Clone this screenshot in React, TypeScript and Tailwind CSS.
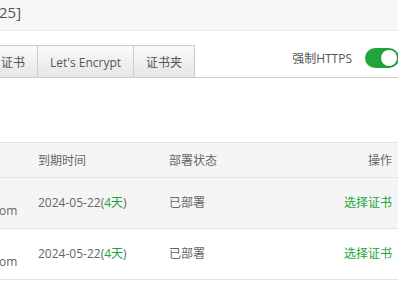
import React from 'react';

const rows = [
  { date: '2024-05-22', left: '4天', status: '已部署' },
  { date: '2024-05-22', left: '4天', status: '已部署' },
];

export default function App() {
  return (
    <div
      className="w-[398px] h-[308px] overflow-hidden bg-white text-[12px] text-[#666]"
      style={{ fontFamily: '"Open Sans", "Noto Sans CJK SC", sans-serif' }}
    >
      <div className="h-[31px] bg-[#f6f6f6] border-b border-[#eaeaea] flex items-start pt-[1px]">
        <span className="-ml-[1px] text-[15px] text-[#555]">25]</span>
      </div>

      <div className="mt-[15px] h-[32px] flex items-end justify-between border-b border-[#ccc]">
        <div className="flex h-[32px] -ml-[12px]">
          <div className="px-[12px] pt-[3px] flex items-center border border-b-0 border-[#ccc] bg-gradient-to-b from-[#fafafa] to-[#e6e6e6] text-[#555]">
            证书
          </div>
          <div className="px-[12px] pt-[3px] flex items-center border border-l-0 border-b-0 border-[#ccc] bg-gradient-to-b from-[#fafafa] to-[#e6e6e6] text-[#555]">
            Let's Encrypt
          </div>
          <div className="px-[12px] pt-[3px] flex items-center border border-l-0 border-b-0 border-[#ccc] bg-gradient-to-b from-[#fafafa] to-[#e6e6e6] text-[#555]">
            证书夹
          </div>
        </div>
        <div className="flex items-center self-start mt-[1px] gap-[13px] -mr-[1px]">
          <span className="text-[#555] mt-[3px]">强制HTTPS</span>
          <div className="w-[34px] h-[20px] rounded-full bg-[#20a53a] flex items-center justify-end pr-[2px]">
            <div className="w-[16px] h-[16px] rounded-full bg-white shadow" />
          </div>
        </div>
      </div>

      <div className="mt-[64px] border-t border-[#e4e4e4]">
        <div className="h-[35px] bg-[#f5f5f5] border-b border-[#e4e4e4] flex items-center pt-[1px]">
          <div className="w-[38px]" />
          <div className="w-[131px]">到期时间</div>
          <div className="flex-1">部署状态</div>
          <div className="pr-[6px]">操作</div>
        </div>
        {rows.map((r, i) => (
          <div
            key={i}
            className={`h-[51px] border-b border-[#e4e4e4] flex items-center ${i === 0 ? 'bg-[#f5f5f5]' : 'bg-white'}`}
          >
            <div className="w-[38px] flex flex-col leading-[16px]">
              <span>&nbsp;</span>
              <span className="-ml-[1px]">om</span>
            </div>
            <div className="w-[131px]">
              {r.date}(<span className="text-[#20a53a]">{r.left}</span>)
            </div>
            <div className="flex-1">{r.status}</div>
            <div className="pr-[6px] text-[#20a53a]">选择证书</div>
          </div>
        ))}
      </div>
    </div>
  );
}
